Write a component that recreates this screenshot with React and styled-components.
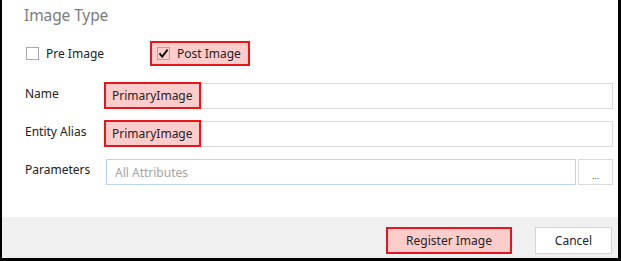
import React from 'react'
import styled, { createGlobalStyle } from 'styled-components'

const GlobalStyle = createGlobalStyle`
  body {
    margin: 0;
    background: #fff;
    font-family: "Noto Sans", "Open Sans", sans-serif;
  }
`

const red = '#e8161b'
const pink = '#ffcccc'

const Frame = styled.div`
  width: 621px;
  height: 261px;
  box-sizing: border-box;
  border-left: 2px solid #000;
  border-right: 3px solid #000;
  border-bottom: 3px solid #000;
  display: flex;
  flex-direction: column;
  background: #fff;
`

const Body = styled.div`
  flex: 1;
  padding: 5px 5px 0 22px;
`

const Title = styled.div`
  font-size: 15.5px;
  line-height: 20px;
  color: #7c7c7c;
  letter-spacing: -0.1px;
`

const OptionRow = styled.div`
  display: flex;
  align-items: center;
  margin-top: 16px;
  height: 25px;
`

const Option = styled.label`
  display: flex;
  align-items: center;
  gap: 7px;
  height: 25px;
  box-sizing: border-box;
  font-size: 12px;
  color: #222;
  ${({ $marked }) => ($marked
    ? `border: 2px solid ${red}; background: ${pink}; padding: 0 7px 0 5px;`
    : 'width: 124px; margin-left: 2px;')}
`

const Box = styled.span`
  width: 13px;
  height: 13px;
  box-sizing: border-box;
  border: 1px solid #a8a8a8;
  background: ${({ $checked }) => ($checked ? 'transparent' : '#fff')};
  display: flex;
  align-items: center;
  justify-content: center;
`

const Form = styled.div`
  display: grid;
  grid-template-columns: 82px 1fr;
  grid-auto-rows: 26px;
  row-gap: 12px;
  align-items: center;
  margin-top: 17px;
`

const Label = styled.div`
  font-size: 12px;
  color: #222;
  padding-left: 1px;
  margin-bottom: 5px;
`

const FieldLine = styled.div`
  display: flex;
  gap: 2px;
  height: 26px;
`

const Field = styled.div`
  flex: 1;
  display: flex;
  align-items: center;
  box-sizing: border-box;
  height: 26px;
  border: 1px solid ${({ $focus }) => ($focus ? '#b9d4ee' : '#dadada')};
  background: #fff;
  font-size: 12px;
  color: ${({ $placeholder }) => ($placeholder ? '#a3a3a3' : '#222')};
  padding-left: 8px;
`

const Mark = styled.span`
  display: flex;
  align-items: center;
  align-self: stretch;
  margin: -2px 0 -1px -11px;
  padding: 0 6px 0 6px;
  border: 2px solid ${red};
  background: ${pink};
`

const Browse = styled.button`
  width: 35px;
  height: 26px;
  box-sizing: border-box;
  border: 1px solid #dadada;
  background: #fff;
  font-family: inherit;
  font-size: 9px;
  color: #555;
  padding: 6px 0 0;
  cursor: pointer;
`

const Footer = styled.div`
  height: 41px;
  box-sizing: border-box;
  background: #f0f0f0;
  display: flex;
  justify-content: flex-end;
  align-items: flex-start;
  gap: 23px;
  padding: 10px 6px 0 0;
`

const Button = styled.button`
  height: 27px;
  width: ${({ $w }) => $w}px;
  box-sizing: border-box;
  font-family: inherit;
  font-size: 12px;
  color: #222;
  background: ${({ $marked }) => ($marked ? pink : '#fff')};
  border: ${({ $marked }) => ($marked ? `2px solid ${red}` : '1px solid #d4d4d4')};
  cursor: pointer;
`

const Check = () => (
  <svg width="11" height="11" viewBox="0 0 11 11">
    <path d="M1.5 5.3 L4.2 8.6 L9.6 1.6" fill="none" stroke="#111" strokeWidth="1.9" />
  </svg>
)

export default function App() {
  return (
    <>
      <GlobalStyle />
      <Frame>
        <Body>
          <Title>Image Type</Title>
          <OptionRow>
            <Option>
              <Box />
              Pre Image
            </Option>
            <Option $marked>
              <Box $checked><Check /></Box>
              Post Image
            </Option>
          </OptionRow>
          <Form>
            <Label>Name</Label>
            <FieldLine>
              <Field><Mark>PrimaryImage</Mark></Field>
            </FieldLine>
            <Label>Entity Alias</Label>
            <FieldLine>
              <Field><Mark>PrimaryImage</Mark></Field>
            </FieldLine>
            <Label>Parameters</Label>
            <FieldLine>
              <Field $focus $placeholder>All Attributes</Field>
              <Browse>...</Browse>
            </FieldLine>
          </Form>
        </Body>
        <Footer>
          <Button $marked $w={126}>Register Image</Button>
          <Button $w={77}>Cancel</Button>
        </Footer>
      </Frame>
    </>
  )
}
